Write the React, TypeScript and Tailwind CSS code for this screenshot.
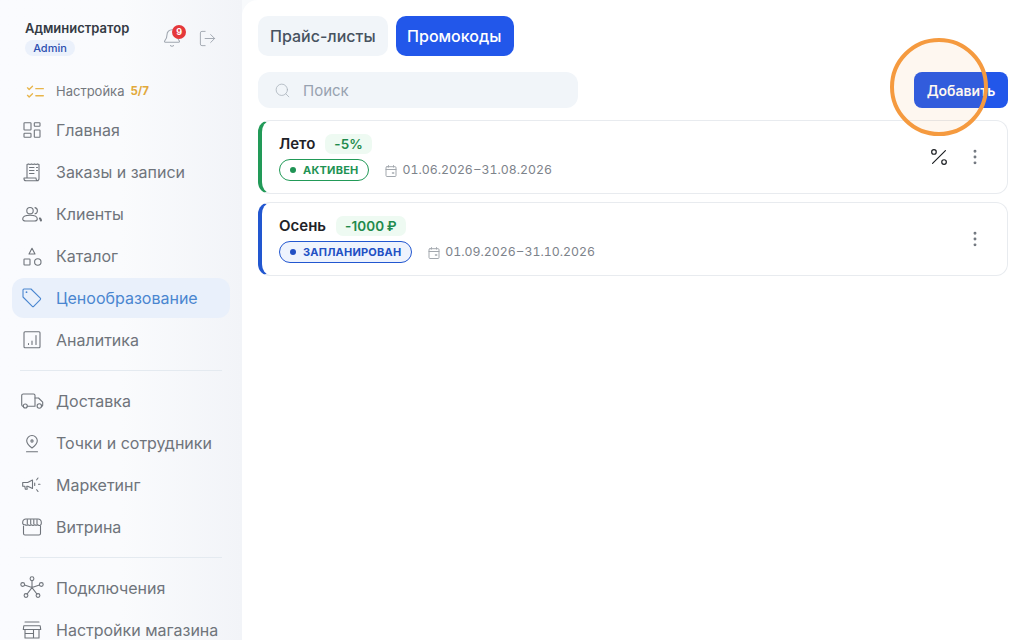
import { Bell, EllipsisVertical, LogOut, Percent, Search } from 'lucide-react';
import type { ReactNode } from 'react';

type IconProps = { className?: string };

function Svg({ className, children }: IconProps & { children: ReactNode }) {
  return (
    <svg viewBox="0 0 24 24" fill="none" stroke="currentColor" strokeWidth="1.1" strokeLinecap="round" strokeLinejoin="round" className={className}>
      {children}
    </svg>
  );
}

const HomeIcon = ({ className }: IconProps) => (
  <Svg className={className}>
    <rect x="4" y="4.700" width="7" height="7.300" rx="0.600" />
    <rect x="14.300" y="4.700" width="5.700" height="3.600" rx="0.600" />
    <rect x="4" y="15.300" width="7" height="4" rx="0.600" />
    <rect x="14.300" y="12" width="5.700" height="7.300" rx="0.600" />
  </Svg>
);

const OrdersIcon = ({ className }: IconProps) => (
  <Svg className={className}>
    <path d="M7 18V4.500l1.500-.6 1.500.6 1.500-.6 1.500.6 1.500-.6 1.500.6 1.500-.6 1.500.6v14a2.200 2.200 0 0 1-2.200 2.200H6a2 2 0 0 1-2-2V18h12v.5a2.200 2.200 0 0 0 2 2.200" />
    <path d="M9.500 7.500h4.500M9.500 10.500h4.500M9.500 13.500h4.500M16.500 7.500h1M16.500 10.500h1" />
  </Svg>
);

const ClientsIcon = ({ className }: IconProps) => (
  <Svg className={className}>
    <circle cx="10" cy="8.700" r="3.200" />
    <path d="M5.500 19c-1.700 0-2.800-.8-2.800-2 0-2.200 3-3.800 7.300-3.800s7.300 1.600 7.300 3.800c0 1.200-1.100 2-2.800 2z" />
    <path d="M15 5.600a3.200 3.200 0 0 1 0 6.200" />
    <path d="M20 16.500c.6.500.9 1.100.9 2" strokeWidth="2.200" />
  </Svg>
);

const CatalogIcon = ({ className }: IconProps) => (
  <Svg className={className}>
    <path d="M12 4.300 15 10H9z" />
    <rect x="4" y="15" width="6" height="6" rx="0.600" />
    <circle cx="17.800" cy="18" r="3.200" />
  </Svg>
);

const TagIcon = ({ className }: IconProps) => (
  <Svg className={className}>
    <path d="M4 3h7l9.300 9.200a1 1 0 0 1 0 1.400l-6.600 6.700a1 1 0 0 1-1.400 0L3 11V4a1 1 0 0 1 1-1z" />
    <path d="M6.500 6.200h.01" strokeWidth="1.800" />
  </Svg>
);

const ChartIcon = ({ className }: IconProps) => (
  <Svg className={className}>
    <rect x="4" y="3.700" width="16" height="16" rx="1" />
    <path d="M8.500 16.500v-1M12 16.500v-3.500M16 16.500V7.500" />
  </Svg>
);

const TruckIcon = ({ className }: IconProps) => (
  <Svg className={className}>
    <path d="M3.300 17.300a1.600 1.600 0 0 1-1.600-1.600V6.600A1.600 1.600 0 0 1 3.300 5h10.200A1.500 1.500 0 0 1 15 6.500v10.800H7.300" />
    <path d="M15 9h3.500l4.200 4.200v3a1 1 0 0 1-1 1" />
    <circle cx="5.300" cy="17" r="2" />
    <circle cx="19.300" cy="17" r="2.200" />
  </Svg>
);

const PinIcon = ({ className }: IconProps) => (
  <Svg className={className}>
    <path d="M12 17s-5.300-3.800-5.300-7.200a5.300 5.300 0 0 1 10.600 0C17.300 13.200 12 17 12 17z" />
    <circle cx="12" cy="10" r="1.100" />
    <path d="M6.500 20.700h11" />
  </Svg>
);

const MegaphoneIcon = ({ className }: IconProps) => (
  <Svg className={className}>
    <path d="M2.700 9.500h5L12.500 7v8.500l-4.800-2.300h-1l.5 3H5.300l-.5-3H2.700z" />
    <path d="M14.700 10v2.500M18 5l-1.300 1.800M20 11.300h-1.500M18 18.500l-1.300-1.800" />
  </Svg>
);

const StoreIcon = ({ className }: IconProps) => (
  <Svg className={className}>
    <path d="M6 4h12a3.200 3.200 0 0 1 3.300 3.200V8.500a2 2 0 0 1-3.600 1.200 2.700 2.700 0 0 1-3 0 2.700 2.700 0 0 1-3.400 0 2.700 2.700 0 0 1-3.300 0 2.700 2.700 0 0 1-3 0A2 2 0 0 1 2.700 8.500V7.200A3.200 3.200 0 0 1 6 4z" />
    <path d="M7.300 4.500v4.500M10.700 4.500v4.500M13.800 4.500v4.500M17 4.500v4.500" />
    <path d="M3.500 11v7.500A1.500 1.500 0 0 0 5 20h14a1.500 1.500 0 0 0 1.500-1.500V11" />
  </Svg>
);

const NodesIcon = ({ className }: IconProps) => (
  <Svg className={className}>
    <circle cx="12" cy="2.700" r="1.900" />
    <circle cx="2.700" cy="8.500" r="1.900" />
    <circle cx="21.300" cy="8.500" r="1.900" />
    <circle cx="6" cy="19.500" r="1.900" />
    <circle cx="18" cy="19.500" r="1.900" />
    <path d="M12 4.600v7M4.500 9.100 12 11.600M19.500 9.100 12 11.600M7.100 18 12 11.600M16.900 18 12 11.600" />
  </Svg>
);

const ShopSettingsIcon = ({ className }: IconProps) => (
  <Svg className={className}>
    <path d="M5 4h14M3.800 7.800h16.400l.5 3.700H3.300z" />
    <path d="M5 11.500V20h14v-8.500M5 15.500h8.500M13.500 11.500V20" />
  </Svg>
);

const ChecklistIcon = ({ className }: IconProps) => (
  <svg viewBox="0 0 24 24" fill="none" stroke="currentColor" strokeWidth="1.600" strokeLinecap="round" strokeLinejoin="round" className={className}>
    <path d="m3 7 2 2 4-4M3 16l2 2 4-4M13 8h9M13 16.500h9" />
  </svg>
);

const DateIcon = ({ className }: IconProps) => (
  <svg viewBox="0 0 12 12" fill="none" stroke="currentColor" strokeWidth="1" strokeLinecap="round" strokeLinejoin="round" className={className}>
    <rect x="1" y="1.700" width="10" height="9.800" rx="1" />
    <path d="M1 4.500h10M3.500 .6v1.500M8.500 .6v1.500" />
    <path d="M7.500 8h1.200" strokeWidth="1.500" />
  </svg>
);

const mainNav = [
  { label: 'Главная', icon: HomeIcon },
  { label: 'Заказы и записи', icon: OrdersIcon },
  { label: 'Клиенты', icon: ClientsIcon },
  { label: 'Каталог', icon: CatalogIcon },
  { label: 'Ценообразование', icon: TagIcon, active: true },
  { label: 'Аналитика', icon: ChartIcon },
];
const salesNav = [
  { label: 'Доставка', icon: TruckIcon },
  { label: 'Точки и сотрудники', icon: PinIcon },
  { label: 'Маркетинг', icon: MegaphoneIcon },
  { label: 'Витрина', icon: StoreIcon },
];
const settingsNav = [
  { label: 'Подключения', icon: NodesIcon },
  { label: 'Настройки магазина', icon: ShopSettingsIcon },
];

function NavItem({ label, icon: Icon, active }: { label: string; icon: (p: IconProps) => ReactNode; active?: boolean }) {
  return (
    <div className={`flex h-[40px] shrink-0 items-center gap-[12px] rounded-[12px] pl-[8px] text-[16px] ${active ? 'bg-[#e9f0fb] text-[#4a86d0]' : 'text-[#6f747b]'}`}>
      <span className="flex w-[24px] justify-center">
        <Icon className="h-[24px] w-[24px]" />
      </span>
      <span className="whitespace-nowrap">{label}</span>
    </div>
  );
}

function PromoCard({ name, discount, status, dates, accent, badge, dot, menuExtra }: {
  name: string; discount: string; status: string; dates: string; accent: string; badge: string; dot: string; menuExtra?: boolean;
}) {
  return (
    <div className={`flex h-[74px] items-center rounded-[12px] border border-l-[4px] border-[#e8ebef] bg-white pl-[17px] pr-[22px] ${accent}`}>
      <div className="flex flex-col gap-[4px]">
        <div className="flex h-[22px] items-center gap-[10px]">
          <span className="text-[15px] font-semibold text-[#1f2328]">{name}</span>
          <span className="flex h-[20px] items-center rounded-[7px] bg-[#eefaf2] px-[9px] text-[13.5px] font-semibold tracking-[0.1px] text-[#1f8a4d] [word-spacing:-1px]">{discount}</span>
        </div>
        <div className="flex items-center gap-[16px]">
          <span className={`flex h-[22px] items-center gap-[7px] rounded-full border px-[10px] text-[11px] font-bold tracking-[0.2px] ${badge}`}>
            <span className={`h-[6px] w-[6px] rounded-full ${dot}`} />
            {status}
          </span>
          <span className="flex items-center gap-[5px] pt-[1px] text-[12.300px] tabular-nums text-[#7d838b] [word-spacing:-2px]">
            <DateIcon className="h-[12px] w-[12px] text-[#a3a8ae]" />
            {dates}
          </span>
        </div>
      </div>
      <div className="ml-auto flex items-center gap-[15px]">
        {menuExtra && <Percent className="h-[22px] w-[22px] text-[#1c1f23]" strokeWidth={1.300} />}
        <EllipsisVertical className="h-[20px] w-[20px] text-[#6f757d]" strokeWidth={1.500} />
      </div>
    </div>
  );
}

export default function App() {
  return (
    <div className="relative flex h-[640px] w-[1024px] overflow-hidden bg-[#f8fafc] font-['Inter',sans-serif]">
      <aside className="flex w-[242px] shrink-0 flex-col overflow-hidden bg-gradient-to-r from-[#fafbfe] via-[#fafbfd] to-[#f2f4f8] px-[12px]">
        <div className="flex h-[76px] shrink-0 items-start pl-[13px] pt-[20px]">
          <div className="flex flex-col gap-[4px]">
            <span className="text-[13px] font-semibold leading-[16px] text-[#343a44]">Администратор</span>
            <span className="flex h-[16px] w-[50px] items-center justify-center rounded-full bg-[#ebf1fb] text-[11px] font-medium text-[#2b4fb0]">Admin</span>
          </div>
          <div className="relative ml-[33px] mt-[8px]">
            <Bell className="h-[20px] w-[20px] text-[#a0a7b0]" strokeWidth={1.300} />
            <span className="absolute -right-[4px] -top-[3px] flex h-[14px] w-[14px] items-center justify-center rounded-full bg-[#e5383b] text-[9px] font-bold text-white">9</span>
          </div>
          <LogOut className="ml-[16px] mt-[9px] h-[19px] w-[19px] text-[#a0a7b0]" strokeWidth={1.200} />
        </div>
        <div className="mt-[1px] flex h-[30px] shrink-0 items-center pl-[13px] text-[13px] text-[#74787e]">
          <ChecklistIcon className="h-[20px] w-[20px] text-[#e8b54a]" />
          <span className="ml-[11px]">Настройка</span>
          <span className="ml-[6px] text-[11.500px] font-bold text-[#e2a93b]">5/7</span>
        </div>
        <nav className="mt-[3px] flex flex-col gap-[2px]">
          {mainNav.map((item) => <NavItem key={item.label} {...item} />)}
          <div className="mx-[8px] my-[8px] h-px shrink-0 bg-[#e4eaf0]" />
          {salesNav.map((item) => <NavItem key={item.label} {...item} />)}
          <div className="mx-[8px] my-[8px] h-px shrink-0 bg-[#e4eaf0]" />
          {settingsNav.map((item) => <NavItem key={item.label} {...item} />)}
        </nav>
      </aside>
      <main className="flex min-w-0 flex-1 flex-col gap-[16px] rounded-tl-[16px] bg-white pb-[16px] pl-[16px] pr-[16px] pt-[16px]">
        <div className="flex gap-[8px]">
          <button className="h-[40px] rounded-[10px] bg-[#f1f5f9] px-[12px] text-[16px] font-medium text-[#475260]">Прайс-листы</button>
          <button className="h-[40px] rounded-[10px] bg-[#2257ea] pl-[11.500px] pr-[12.500px] text-[16px] font-medium text-white">Промокоды</button>
        </div>
        <div className="-mb-[4px] flex items-center justify-between">
          <div className="flex h-[36px] w-[320px] items-center gap-[12px] rounded-[12px] bg-[#f1f5f9] pl-[16px] text-[15px] text-[#98a2b0]">
            <Search className="h-[17px] w-[17px] text-[#a8b0ba]" strokeWidth={1.100} />
            <span className="mt-[2px]">Поиск</span>
          </div>
          <button className="h-[36px] w-[94px] rounded-[8px] bg-[#2257ea] text-[14px] font-semibold text-white">Добавить</button>
        </div>
        <div className="flex flex-col gap-[8px]">
          <PromoCard name="Лето" discount="-5%" status="АКТИВЕН" dates="01.06.2026 – 31.08.2026" accent="border-l-[#229a58]" badge="border-[#229a58] bg-white text-[#1f9354]" dot="bg-[#1f9354]" menuExtra />
          <PromoCard name="Осень" discount="-1000 ₽" status="ЗАПЛАНИРОВАН" dates="01.09.2026 – 31.10.2026" accent="border-l-[#2257d0]" badge="border-[#2257d0] bg-[#eef3fd] text-[#2250c4]" dot="bg-[#2250c4]" />
        </div>
      </main>
      {/* highlight ring over the add button */}
      <div className="pointer-events-none absolute left-[890px] top-[38px] h-[98px] w-[98px] rounded-full border-[4px] border-[#f59a3f] bg-[#f59a3f]/8" />
    </div>
  );
}
